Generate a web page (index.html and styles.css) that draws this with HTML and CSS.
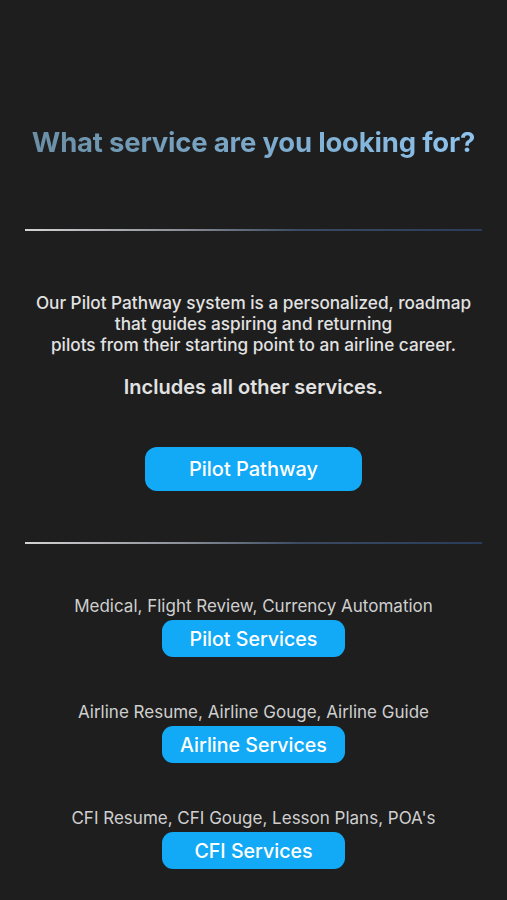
FILE: index.html
```html
<!DOCTYPE html>
<html lang="en">
<head>
    <meta charset="UTF-8">
    <meta name="viewport" content="width=device-width, initial-scale=1.0">
    <title>Services</title>
    <link rel="stylesheet" href="styles.css">
</head>
<body>
    <div class="container">
        <h1 class="title">What service are you looking for?</h1>

        <hr class="divider">

        <!-- Pilot Pathway -->
        <div class="pathway">
            <p class="pathway-text">Our Pilot Pathway system is a personalized, roadmap<br>that guides aspiring and returning<br>pilots from their starting point to an airline career.</p>
            <p class="pathway-note">Includes all other services.</p>
            <button class="btn btn-large">Pilot Pathway</button>
        </div>

        <hr class="divider">

        <!-- Other services -->
        <div class="service">
            <p class="service-text">Medical, Flight Review, Currency Automation</p>
            <button class="btn">Pilot Services</button>
        </div>
        <div class="service">
            <p class="service-text">Airline Resume, Airline Gouge, Airline Guide</p>
            <button class="btn">Airline Services</button>
        </div>
        <div class="service">
            <p class="service-text">CFI Resume, CFI Gouge, Lesson Plans, POA's</p>
            <button class="btn">CFI Services</button>
        </div>
    </div>
</body>
</html>
```

FILE: styles.css
```css
body {
    margin: 0;
    background-color: #1e1e1e;
    font-family: Inter, "Noto Sans", sans-serif;
    color: #e2e2e2;
}
.container {
    padding: 125px 25px 0;
    text-align: center;
}
.title {
    margin: 0 0 70px;
    font-size: 27.5px;
    line-height: 34px;
    font-weight: 700;
    letter-spacing: -0.2px;
    background: linear-gradient(90deg, #6a8ea5, #8ec4ef);
    -webkit-background-clip: text;
    background-clip: text;
    color: transparent;
}
.divider {
    height: 2px;
    border: none;
    margin: 0;
    background: linear-gradient(90deg, #d4d4d4 0%, #8a8e96 35%, #3a4a62 60%, #2a3c5a 100%);
}
.pathway {
    padding-top: 61px;
    padding-bottom: 51px;
}
.pathway-text {
    margin: 0;
    font-size: 17.2px;
    line-height: 21px;
    font-weight: 500;
}
.pathway-note {
    margin: 20px 0 0;
    font-size: 20px;
    line-height: 24px;
    font-weight: 600;
}
.btn {
    font-family: inherit;
    border: none;
    background-color: #12a9f6;
    color: white;
    font-size: 19.6px;
    font-weight: 500;
    width: 183px;
    height: 37px;
    border-radius: 11px;
    cursor: pointer;
}
.btn-large {
    display: block;
    margin: 48px auto 0;
    width: 217px;
    height: 44px;
    border-radius: 12px;
    font-size: 20px;
}
.service {
    margin-top: 51px;
}
.service + .service {
    margin-top: 44px;
}
.service-text {
    margin: 0 0 3px;
    font-size: 17px;
    line-height: 22px;
    color: #cfcfcf;
}
.service .btn {
    display: block;
    margin: 0 auto;
}
```
